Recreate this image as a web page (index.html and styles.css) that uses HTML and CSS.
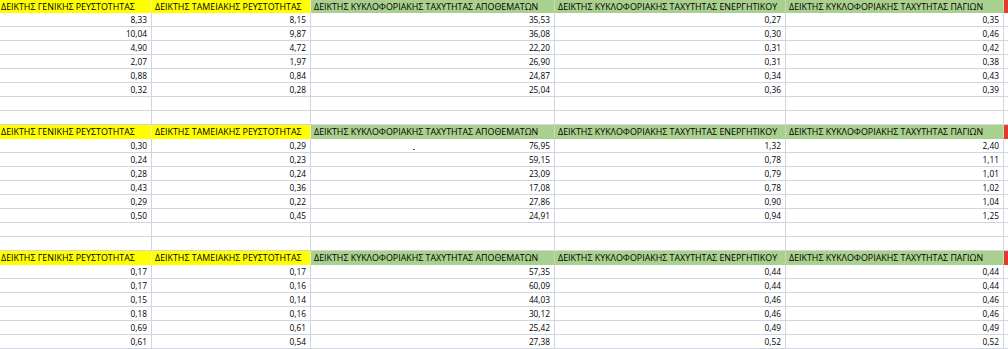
FILE: index.html
```html
<!DOCTYPE html>
<html lang="el">
<head>
<meta charset="utf-8">
<title>Δείκτες</title>
<link rel="stylesheet" href="styles.css">
</head>
<body>
<div class="sheet">
  <div class="row head first">
    <div class="c y">ΔΕΙΚΤΗΣ ΓΕΝΙΚΗΣ ΡΕΥΣΤΟΤΗΤΑΣ</div>
    <div class="c y">ΔΕΙΚΤΗΣ ΤΑΜΕΙΑΚΗΣ ΡΕΥΣΤΟΤΗΤΑΣ</div>
    <div class="c g">ΔΕΙΚΤΗΣ ΚΥΚΛΟΦΟΡΙΑΚΗΣ ΤΑΧΥΤΗΤΑΣ ΑΠΟΘΕΜΑΤΩΝ</div>
    <div class="c g">ΔΕΙΚΤΗΣ ΚΥΚΛΟΦΟΡΙΑΚΗΣ ΤΑΧΥΤΗΤΑΣ ΕΝΕΡΓΗΤΙΚΟΥ</div>
    <div class="c g">ΔΕΙΚΤΗΣ ΚΥΚΛΟΦΟΡΙΑΚΗΣ ΤΑΧΥΤΗΤΑΣ ΠΑΓΙΩΝ</div>
    <div class="c r"></div>
  </div>
  <div class="row"><div class="c n">8,33</div><div class="c n">8,15</div><div class="c n">35,53</div><div class="c n">0,27</div><div class="c n">0,35</div><div class="c"></div></div>
  <div class="row"><div class="c n">10,04</div><div class="c n">9,87</div><div class="c n">36,08</div><div class="c n">0,30</div><div class="c n">0,46</div><div class="c"></div></div>
  <div class="row"><div class="c n">4,90</div><div class="c n">4,72</div><div class="c n">22,20</div><div class="c n">0,31</div><div class="c n">0,42</div><div class="c"></div></div>
  <div class="row"><div class="c n">2,07</div><div class="c n">1,97</div><div class="c n">26,90</div><div class="c n">0,31</div><div class="c n">0,38</div><div class="c"></div></div>
  <div class="row"><div class="c n">0,88</div><div class="c n">0,84</div><div class="c n">24,87</div><div class="c n">0,34</div><div class="c n">0,43</div><div class="c"></div></div>
  <div class="row"><div class="c n">0,32</div><div class="c n">0,28</div><div class="c n">25,04</div><div class="c n">0,36</div><div class="c n">0,39</div><div class="c"></div></div>
  <div class="row"><div class="c"></div><div class="c"></div><div class="c"></div><div class="c"></div><div class="c"></div><div class="c"></div></div>
  <div class="row"><div class="c"></div><div class="c"></div><div class="c"></div><div class="c"></div><div class="c"></div><div class="c"></div></div>

  <div class="row head">
    <div class="c y">ΔΕΙΚΤΗΣ ΓΕΝΙΚΗΣ ΡΕΥΣΤΟΤΗΤΑΣ</div>
    <div class="c y">ΔΕΙΚΤΗΣ ΤΑΜΕΙΑΚΗΣ ΡΕΥΣΤΟΤΗΤΑΣ</div>
    <div class="c g">ΔΕΙΚΤΗΣ ΚΥΚΛΟΦΟΡΙΑΚΗΣ ΤΑΧΥΤΗΤΑΣ ΑΠΟΘΕΜΑΤΩΝ</div>
    <div class="c g">ΔΕΙΚΤΗΣ ΚΥΚΛΟΦΟΡΙΑΚΗΣ ΤΑΧΥΤΗΤΑΣ ΕΝΕΡΓΗΤΙΚΟΥ</div>
    <div class="c g">ΔΕΙΚΤΗΣ ΚΥΚΛΟΦΟΡΙΑΚΗΣ ΤΑΧΥΤΗΤΑΣ ΠΑΓΙΩΝ</div>
    <div class="c r"></div>
  </div>
  <div class="row"><div class="c n">0,30</div><div class="c n">0,29</div><div class="c n dotted"><span class="dot"></span>76,95</div><div class="c n">1,32</div><div class="c n">2,40</div><div class="c"></div></div>
  <div class="row"><div class="c n">0,24</div><div class="c n">0,23</div><div class="c n">59,15</div><div class="c n">0,78</div><div class="c n">1,11</div><div class="c"></div></div>
  <div class="row"><div class="c n">0,28</div><div class="c n">0,24</div><div class="c n">23,09</div><div class="c n">0,79</div><div class="c n">1,01</div><div class="c"></div></div>
  <div class="row"><div class="c n">0,43</div><div class="c n">0,36</div><div class="c n">17,08</div><div class="c n">0,78</div><div class="c n">1,02</div><div class="c"></div></div>
  <div class="row"><div class="c n">0,29</div><div class="c n">0,22</div><div class="c n">27,86</div><div class="c n">0,90</div><div class="c n">1,04</div><div class="c"></div></div>
  <div class="row"><div class="c n">0,50</div><div class="c n">0,45</div><div class="c n">24,91</div><div class="c n">0,94</div><div class="c n">1,25</div><div class="c"></div></div>
  <div class="row"><div class="c"></div><div class="c"></div><div class="c"></div><div class="c"></div><div class="c"></div><div class="c"></div></div>
  <div class="row"><div class="c"></div><div class="c"></div><div class="c"></div><div class="c"></div><div class="c"></div><div class="c"></div></div>

  <div class="row head">
    <div class="c y">ΔΕΙΚΤΗΣ ΓΕΝΙΚΗΣ ΡΕΥΣΤΟΤΗΤΑΣ</div>
    <div class="c y">ΔΕΙΚΤΗΣ ΤΑΜΕΙΑΚΗΣ ΡΕΥΣΤΟΤΗΤΑΣ</div>
    <div class="c g">ΔΕΙΚΤΗΣ ΚΥΚΛΟΦΟΡΙΑΚΗΣ ΤΑΧΥΤΗΤΑΣ ΑΠΟΘΕΜΑΤΩΝ</div>
    <div class="c g">ΔΕΙΚΤΗΣ ΚΥΚΛΟΦΟΡΙΑΚΗΣ ΤΑΧΥΤΗΤΑΣ ΕΝΕΡΓΗΤΙΚΟΥ</div>
    <div class="c g">ΔΕΙΚΤΗΣ ΚΥΚΛΟΦΟΡΙΑΚΗΣ ΤΑΧΥΤΗΤΑΣ ΠΑΓΙΩΝ</div>
    <div class="c r"></div>
  </div>
  <div class="row"><div class="c n">0,17</div><div class="c n">0,17</div><div class="c n">57,35</div><div class="c n">0,44</div><div class="c n">0,44</div><div class="c"></div></div>
  <div class="row"><div class="c n">0,17</div><div class="c n">0,16</div><div class="c n">60,09</div><div class="c n">0,44</div><div class="c n">0,44</div><div class="c"></div></div>
  <div class="row"><div class="c n">0,15</div><div class="c n">0,14</div><div class="c n">44,03</div><div class="c n">0,46</div><div class="c n">0,46</div><div class="c"></div></div>
  <div class="row"><div class="c n">0,18</div><div class="c n">0,16</div><div class="c n">30,12</div><div class="c n">0,46</div><div class="c n">0,46</div><div class="c"></div></div>
  <div class="row"><div class="c n">0,69</div><div class="c n">0,61</div><div class="c n">25,42</div><div class="c n">0,49</div><div class="c n">0,49</div><div class="c"></div></div>
  <div class="row"><div class="c n">0,61</div><div class="c n">0,54</div><div class="c n">27,38</div><div class="c n">0,52</div><div class="c n">0,52</div><div class="c"></div></div>
</div>
</body>
</html>
```

FILE: styles.css
```css
html, body {
  margin: 0;
  padding: 0;
  background: #ffffff;
  overflow: hidden;
}

.sheet {
  width: 1008px;
  font-family: "Open Sans", "DejaVu Sans", sans-serif;
  font-size: 8.3px;
  color: #000000;
}

.row {
  display: grid;
  grid-template-columns: 152px 159px 244px 231px 218px 4px;
  height: 14px;
}

.row.first {
  height: 13px;
}

.c {
  box-sizing: border-box;
  border-right: 1px solid #d2d5dc;
  border-bottom: 1px solid #d2d5dc;
  line-height: 13px;
  white-space: nowrap;
  overflow: hidden;
  padding: 0 3px 0 2px;
}

.n {
  text-align: right;
  padding-right: 4px;
}

.head .c {
  border-bottom-color: transparent;
  font-size: 8.9px;
  padding-left: 3px;
}

.head .c:first-child {
  padding-left: 1px;
}

.y {
  background: #ffff00;
  border-right-color: #f4f4a0 !important;
}

.g {
  background: #a9d08e;
  border-right-color: #c4dcb0 !important;
}

.r {
  background: #e23a2c;
  border-right: none;
}

.dotted {
  position: relative;
}

.dot {
  position: absolute;
  left: 102px;
  top: 10px;
  width: 2px;
  height: 1px;
  background: #555555;
}
```
